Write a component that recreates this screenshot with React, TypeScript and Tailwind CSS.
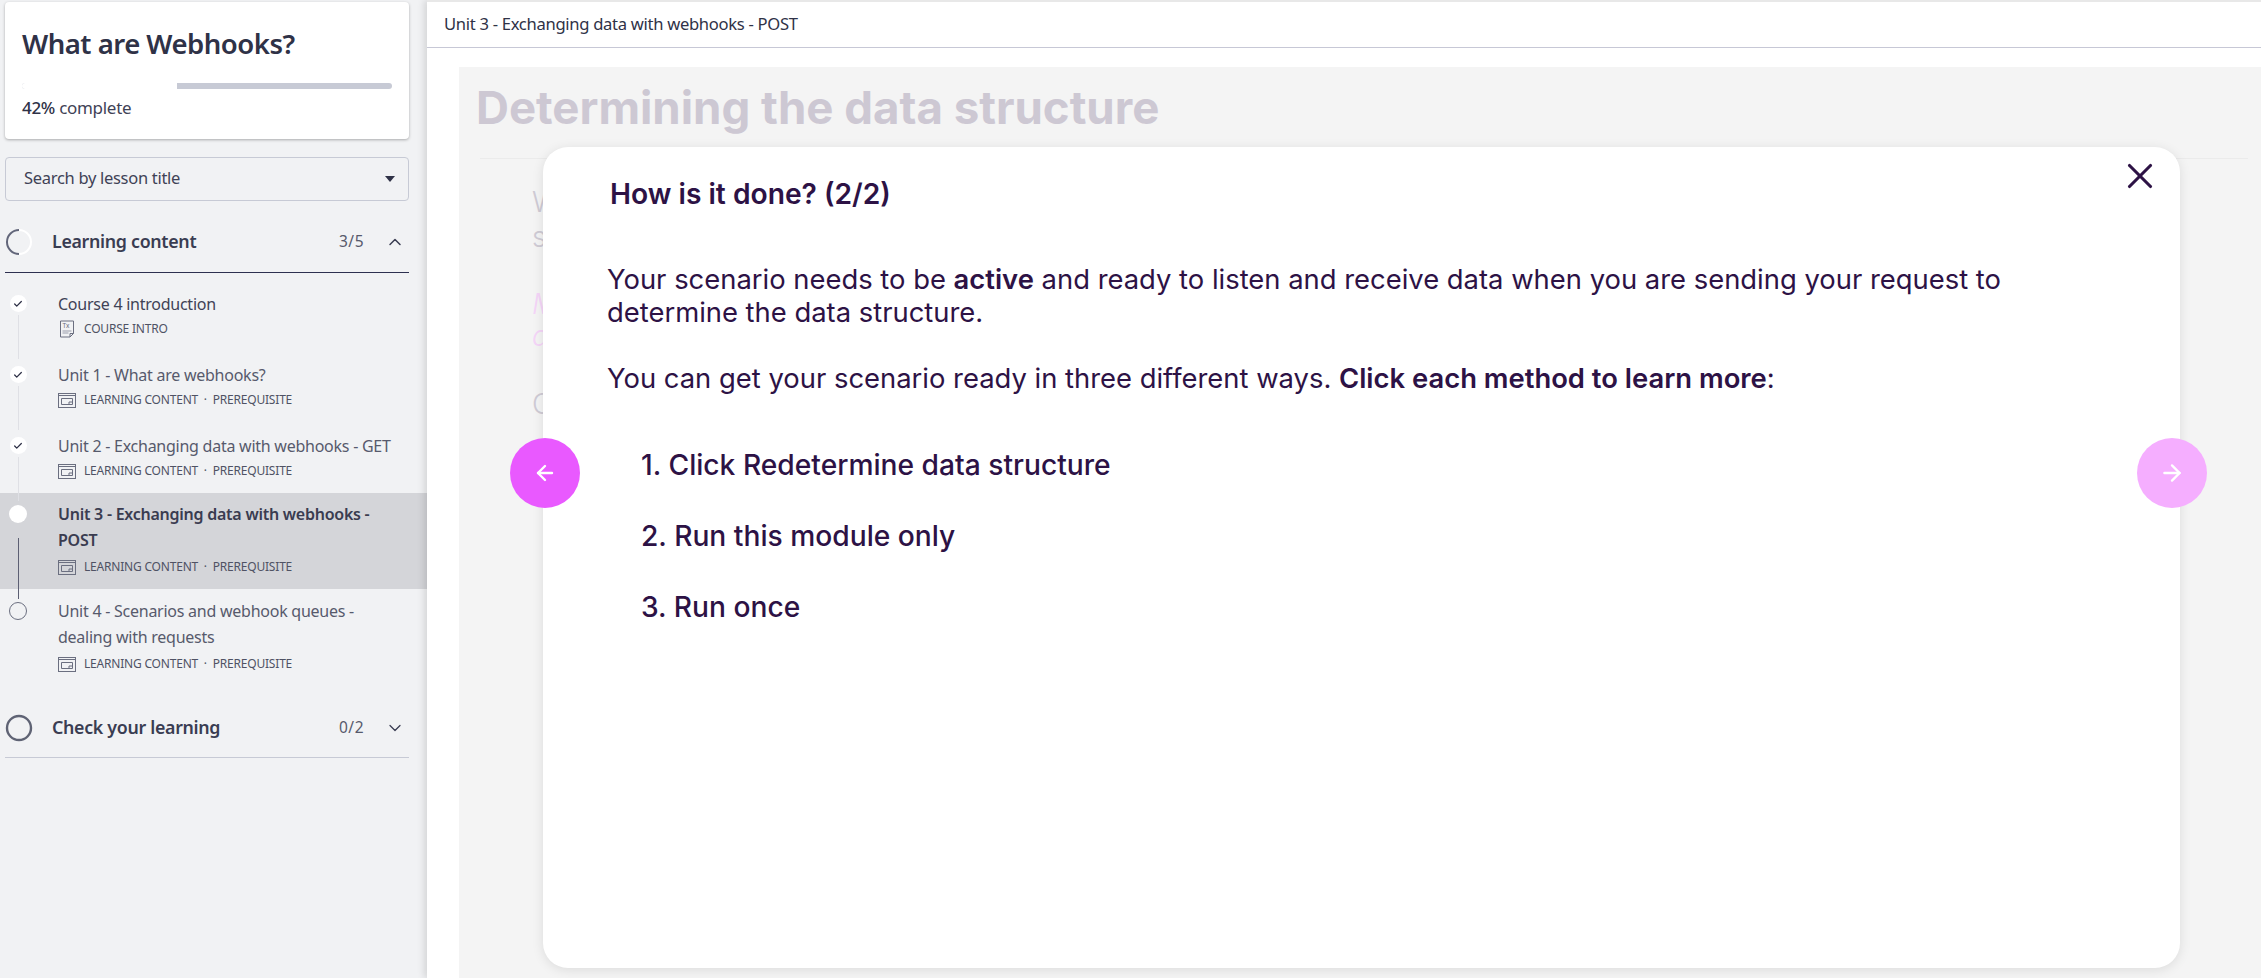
import React from "react";
import { ChevronDown, ChevronUp, ArrowLeft, ArrowRight, X, Check } from "lucide-react";

const sans = "font-['Noto_Sans',sans-serif]";
const inter = "font-['Inter',sans-serif]";

function DocIcon() {
  return (
    <svg width="16" height="18" viewBox="0 0 16 18" fill="none" className="shrink-0">
      <path d="M1.5 1h13v12.5l-3.5 3.5H1.5z" stroke="#6b6f80" strokeWidth="1" />
      <path d="M14.5 13.5H11V17" stroke="#6b6f80" strokeWidth="1" />
      <text x="3.5" y="8" fontSize="6.5" fill="#6b6f80" fontFamily="Noto Sans">Tx</text>
      <path d="M3.5 11h9M3.5 13h6" stroke="#9a9dab" strokeWidth="1" />
    </svg>
  );
}

function SlideIcon() {
  return (
    <svg width="18" height="15" viewBox="0 0 18 15" fill="none" className="shrink-0">
      <rect x="0.5" y="0.5" width="17" height="14" stroke="#6b6f80" />
      <path d="M0.5 2.5h17" stroke="#6b6f80" />
      <path d="M3.5 5.5h11v6h-11z" stroke="#6b6f80" />
      <path d="M11 11.5v-2.5h3.5" stroke="#6b6f80" />
    </svg>
  );
}

function Node({ kind }: { kind: "done" | "current" | "todo" }) {
  if (kind === "done")
    return (
      <span className="flex h-[17px] w-[17px] items-center justify-center rounded-full bg-white">
        <Check size={10} strokeWidth={3} className="text-[#2d2f45]" />
      </span>
    );
  if (kind === "current") return <span className="block h-[18px] w-[18px] rounded-full bg-white" />;
  return <span className="block h-[18px] w-[18px] rounded-full border border-[#6b6f80]" />;
}

type Lesson = {
  lines: string[];
  meta: string;
  kind: "done" | "current" | "todo";
  h: string;
  line: string;
};

const lessons: Lesson[] = [
  { lines: ["Course 4 introduction"], meta: "COURSE INTRO", kind: "done", h: "h-[71px]", line: "mt-[3px] h-[44px] bg-[#dfe0e5]" },
  { lines: ["Unit 1 - What are webhooks?"], meta: "LEARNING CONTENT  ·  PREREQUISITE", kind: "done", h: "h-[71px]", line: "mt-[3px] h-[44px] bg-[#dfe0e5]" },
  { lines: ["Unit 2 - Exchanging data with webhooks - GET"], meta: "LEARNING CONTENT  ·  PREREQUISITE", kind: "done", h: "h-[69px]", line: "mt-[3px] h-[44px] bg-[#dfe0e5]" },
  { lines: ["Unit 3 - Exchanging data with webhooks -", "POST"], meta: "LEARNING CONTENT  ·  PREREQUISITE", kind: "current", h: "h-[96px]", line: "mt-[15px] h-[61px] bg-[#5c5f73]" },
  { lines: ["Unit 4 - Scenarios and webhook queues -", "dealing with requests"], meta: "LEARNING CONTENT  ·  PREREQUISITE", kind: "todo", h: "h-[96px]", line: "" },
];

function LessonRow({ l, i }: { l: Lesson; i: number }) {
  const cur = l.kind === "current";
  return (
    <div className={`relative flex ${i === 3 ? "pt-[11px]" : "pt-[12px]"} ${l.h} ${cur ? "bg-[#d4d5d9]" : ""}`}>
      <div className="flex w-[58px] shrink-0 flex-col items-center pr-[22px]">
        <div className="mt-[1px] flex h-[18px] items-center">
          <Node kind={l.kind} />
        </div>
        {l.line && <span className={`relative z-10 block w-px shrink-0 ${l.line}`} />}
      </div>
      <div className="min-w-0 flex-1">
        {l.lines.map((t) => (
          <div
            key={t}
            className={`h-[26px] text-[16px] leading-[20px] tracking-[-0.25px] whitespace-nowrap ${cur ? "font-semibold text-[#3a3c50]" : i === 0 ? "text-[#3f4256]" : "text-[#575a6c]"}`}
          >
            {t}
          </div>
        ))}
        <div className={`flex h-[18px] items-center gap-[8px] ${i >= 3 ? "mt-[2px]" : ""}`}>
          <span className="flex w-[18px] justify-center">{i === 0 ? <DocIcon /> : <SlideIcon />}</span>
          <span className="text-[12px] whitespace-pre tracking-[-0.2px] text-[#4f5264]">{l.meta}</span>
        </div>
      </div>
    </div>
  );
}

function Ring({ full }: { full?: boolean }) {
  return (
    <svg width="28" height="28" viewBox="0 0 28 28" fill="none" className="shrink-0">
      {full ? (
        <circle cx="14" cy="14" r="12" stroke="#5f6374" strokeWidth="2.4" />
      ) : (
        <>
          <circle cx="14" cy="14" r="12" stroke="#ffffff" strokeWidth="2" />
          <path d="M14 2A12 12 0 0 0 14 26" stroke="#62667a" strokeWidth="2" />
        </>
      )}
    </svg>
  );
}

function SectionHead({ title, count, open }: { title: string; count: string; open: boolean }) {
  return (
    <div className={`mr-[18px] ml-[5px] flex items-center border-b ${open ? "h-[60px] border-[#2d3050] pb-[2px]" : "h-[59px] border-[#c7cad5] pb-[1px]"}`}>
      <Ring full={!open} />
      <span className="ml-[19px] flex-1 text-[17.8px] font-semibold tracking-[-0.3px] text-[#3a3d52]">{title}</span>
      <span className="text-[15.5px] tracking-[0.5px] text-[#575a6c]">{count}</span>
      <span className="mr-[2px] ml-[19px] flex w-[24px] justify-center text-[#3a3d52]">
        {open ? <ChevronUp size={20} strokeWidth={1.8} /> : <ChevronDown size={20} strokeWidth={1.5} />}
      </span>
    </div>
  );
}

function Sidebar() {
  return (
    <aside className={`flex w-[427px] shrink-0 flex-col bg-[#f1f2f4] ${sans}`}>
      <div className="mt-[2px] mr-[18px] ml-[5px] h-[137px] rounded-[4px] bg-white pt-[20px] pl-[17px] shadow-[0_1px_3px_rgba(0,0,0,0.3)]">
        <div className="h-[44px] text-[27.5px] leading-[44px] font-semibold tracking-[-0.5px] text-[#2f3247]">What are Webhooks?</div>
        <div className="mt-[17px] flex h-[6px] w-[370px] overflow-hidden rounded-full bg-[#c7cad5]">
          <div className="w-[155px] bg-white" />
        </div>
        <div className="mt-[7px] text-[17px] leading-[24px] tracking-[-0.3px] text-[#3f4256]">
          <span className="font-medium text-[#2f3247]">42%</span> complete
        </div>
      </div>
      <div className="mt-[18px] mr-[18px] ml-[5px] flex h-[44px] items-center justify-between rounded-[4px] border border-[#c7cad5] pr-[13px] pb-[1px] pl-[18px] text-[16.5px] tracking-[-0.3px] text-[#3f4256]">
        <span>Search by lesson title</span>
        <span className="block h-0 w-0 border-x-[5px] border-t-[6px] border-x-transparent border-t-[#2f3247]" />
      </div>
      <div className="mt-[12px]">
        <SectionHead title="Learning content" count="3/5" open />
      </div>
      <div className="mt-[9px]">
        {lessons.map((l, i) => (
          <LessonRow key={i} l={l} i={i} />
        ))}
      </div>
      <div className="mt-[14px]">
        <SectionHead title="Check your learning" count="0/2" open={false} />
      </div>
    </aside>
  );
}

function Modal() {
  return (
    <div className={`absolute top-[80px] left-[84px] h-[821px] w-[1637px] rounded-[25px] bg-white text-[#2d1245] shadow-[0_2px_12px_rgba(0,0,0,0.1)] ${inter}`}>
      <button className="absolute top-[8px] left-[1576px] text-[#2d1245]">
        <X size={42} strokeWidth={1.8} />
      </button>
      <div className="pt-[28px] pl-[67px]">
        <h2 className="text-[28.2px] leading-[38px] font-semibold">How is it done? (2/2)</h2>
      </div>
      <div className="mt-[50px] pr-[150px] pl-[64px] text-[27.4px] leading-[33px]">
        <p>
          Your scenario needs to be <b className="font-semibold">active</b> and ready to listen and receive data when you are sending your request to determine the data structure.
        </p>
        <p className="mt-[33px]">
          You can get your scenario ready in three different ways. <b className="font-semibold">Click each method to learn more</b>:
        </p>
      </div>
      <ol className="mt-[35px] pl-[98px] text-[28.2px] leading-[71px] font-medium">
        <li>1. Click Redetermine data structure</li>
        <li>2. Run this module only</li>
        <li>3. Run once</li>
      </ol>
      <button className="absolute top-[291px] left-[-33px] flex h-[70px] w-[70px] items-center justify-center rounded-full bg-[#e959ff] text-white">
        <ArrowLeft size={24} strokeWidth={2.4} />
      </button>
      <button className="absolute top-[291px] left-[1594px] flex h-[70px] w-[70px] items-center justify-center rounded-full bg-[#f5aeff] text-white">
        <ArrowRight size={26} strokeWidth={2.2} />
      </button>
    </div>
  );
}

export default function App() {
  return (
    <div className="flex h-[978px] w-[2261px] overflow-hidden bg-white">
      <Sidebar />
      <main className="relative flex min-w-0 flex-1 flex-col shadow-[-3px_0_7px_rgba(0,0,0,0.12)]">
        <div className="h-[2px] bg-[#e8e8e8]" />
        <div className={`flex h-[46px] items-center border-b border-[#c7c8d6] bg-white pl-[17px] text-[16.6px] tracking-[-0.3px] text-[#2f3247] ${sans}`}>
          Unit 3 - Exchanging data with webhooks - POST
        </div>
        <div className="h-[19px]" />
        <div className={`relative ml-[32px] flex-1 bg-[#f4f4f4] ${inter}`}>
          <h1 className="pt-[15px] pl-[17px] text-[45.6px] leading-[52px] font-bold text-[#cdc8d3]">Determining the data structure</h1>
          <div className="mt-[24px] mr-[13px] ml-[21px] h-[1px] bg-[#ebebeb]" />
          <div className="pt-[26px] pl-[73px] text-[28px] leading-[35px] font-light text-[#cfcbd5]">
            <div>W</div>
            <div>s</div>
            <div className="mt-[32px] h-[32px] text-[#f5d5f8] italic">M</div>
            <div className="text-[#f5d5f8] italic">a</div>
            <div className="mt-[33px]">C</div>
          </div>
          <Modal />
        </div>
      </main>
    </div>
  );
}
